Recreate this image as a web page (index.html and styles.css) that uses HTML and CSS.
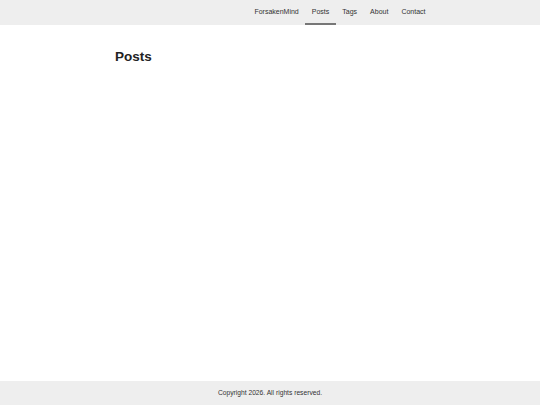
FILE: index.html
```html
<!DOCTYPE html>
<html lang="en">
<head>
<meta charset="utf-8">
<title>Posts | ForsakenMind</title>
<link rel="stylesheet" href="styles.css">
</head>
<body>
<header class="site-header">
  <nav class="container nav">
    <a class="nav-link" href="#">ForsakenMind</a>
    <a class="nav-link active" href="#">Posts</a>
    <a class="nav-link" href="#">Tags</a>
    <a class="nav-link" href="#">About</a>
    <a class="nav-link" href="#">Contact</a>
  </nav>
</header>
<main class="site-main">
  <div class="container content">
    <h1 class="page-title">Posts</h1>
  </div>
</main>
<footer class="site-footer">
  <p class="copyright">Copyright 2026. All rights reserved.</p>
</footer>
</body>
</html>
```

FILE: styles.css
```css
html, body {
  margin: 0;
  padding: 0;
}
body {
  min-height: 100vh;
  display: flex;
  flex-direction: column;
  font-family: "Liberation Sans", Arial, sans-serif;
  color: #222;
  background: #fff;
}
.container {
  width: 324px;
  margin: 0 auto;
}
.site-header {
  background: #eeeeee;
  height: 25px;
}
.nav {
  display: flex;
  justify-content: flex-end;
  height: 25px;
}
.nav-link {
  display: block;
  height: 23px;
  line-height: 23px;
  padding: 0 6.5px;
  font-size: 7px;
  color: #333;
  text-decoration: none;
  border-bottom: 2px solid transparent;
}
.nav-link.active {
  border-bottom-color: #777;
}
.site-main {
  flex: 1;
}
.content {
  padding-top: 24px;
}
.page-title {
  margin: 0;
  padding-left: 7px;
  font-size: 13.5px;
  font-weight: bold;
  color: #222;
}
.site-footer {
  background: #eeeeee;
  height: 24px;
}
.copyright {
  margin: 0;
  line-height: 24px;
  text-align: center;
  font-size: 6.7px;
  color: #333;
}
```
